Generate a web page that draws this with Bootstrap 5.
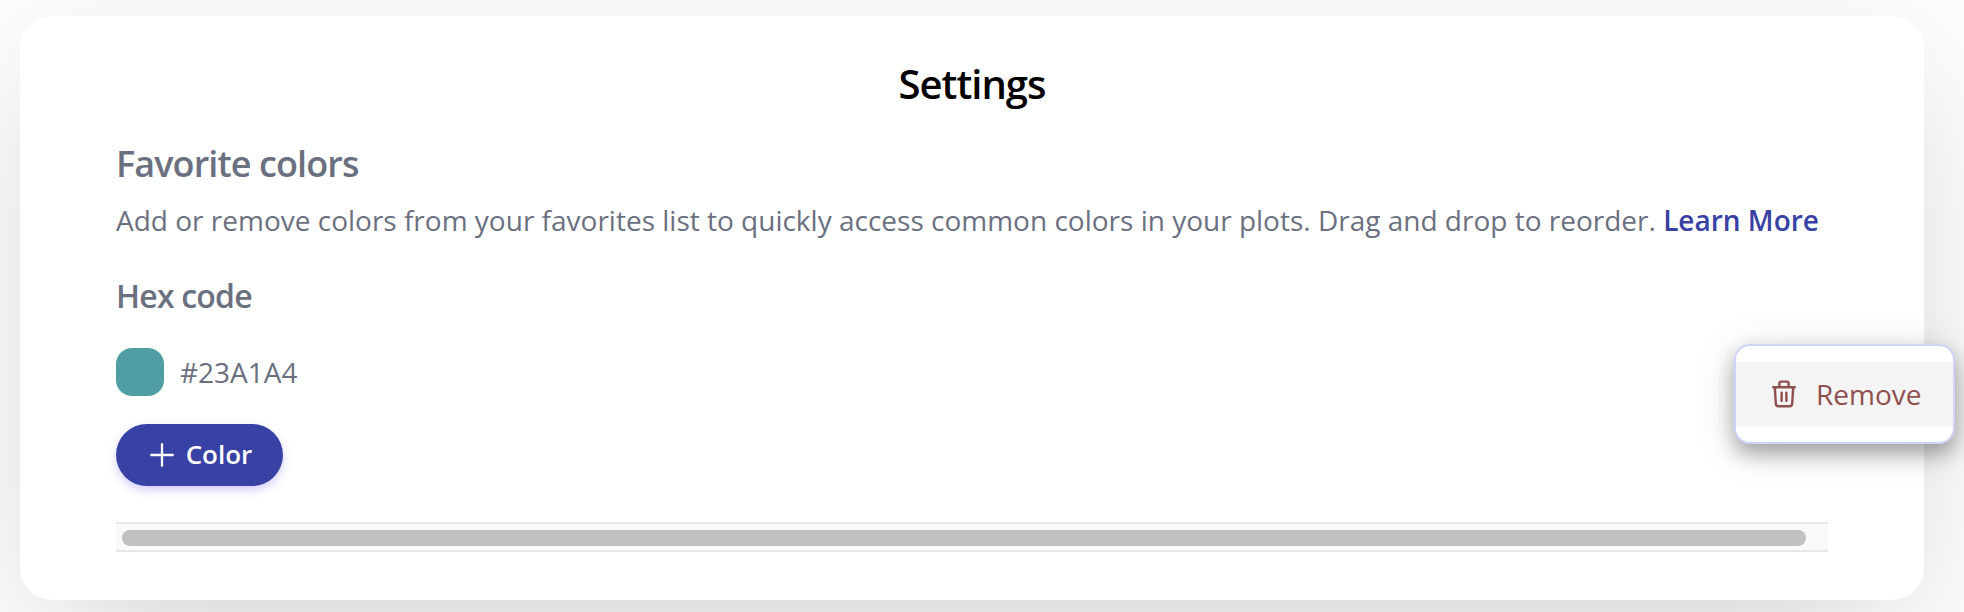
<!DOCTYPE html>
<html lang="en">
<head>
<meta charset="utf-8">
<title>Settings</title>
<link href="https://cdn.jsdelivr.net/npm/bootstrap@5.3.0/dist/css/bootstrap.min.css" rel="stylesheet">
<style>
body{font-family:"Open Sans",sans-serif;font-size:28px;line-height:42px;color:#6b7080;background:#fcfcfc;height:612px;overflow:hidden}
.panel{margin:16px 40px 0 20px;height:584px;border:0;border-radius:32px;padding:44px 96px 0;box-shadow:0 40px 140px -40px rgba(0,0,0,.22)}
.page-title{font-size:40px;line-height:48px;font-weight:600;letter-spacing:-1px;color:#000;margin:0 0 34px}
.section-title{font-size:36px;line-height:44px;font-weight:600;letter-spacing:-.9px;margin:0 0 13px}
.sub-title{font-size:32px;line-height:40px;font-weight:600;letter-spacing:-.8px;margin:35px 0 32px}
.intro{white-space:nowrap}
.intro a{color:#3842a4;font-weight:600}
.swatch{width:48px;height:48px;border-radius:16px;background:#4f9ea3}
.btn-color{width:167px;height:62px;margin-top:28px;background:#3842a4;color:#fff;font-size:26px;line-height:40px;font-weight:600;box-shadow:0 4px 10px rgba(80,70,230,.26)}
.btn-color:hover{background:#2f388f;color:#fff}
.btn-color svg{margin-right:1px}
.btn-text{padding-bottom:2px}
.track{height:30px;margin-top:36px;background:#fafafa;border:solid #e8e8e8;border-width:2px 0;padding:6px 22px 6px 6px}
.thumb{height:16px;background:#c1c1c1}
.remove-menu{left:1734px;top:344px;width:221px;height:100px;min-width:0;border:2px solid #cfd3f8;border-radius:16px;padding:16px 0;box-shadow:0 10px 20px rgba(0,0,0,.3),0 6px 42px rgba(0,0,0,.13)}
.remove-menu .dropdown-item{height:64px;padding:0 0 0 35px;gap:19px;background:#f4f4f4;color:#90504f;font-size:28px}
</style>
</head>
<body>
<main class="card panel">
  <h1 class="page-title text-center">Settings</h1>
  <h2 class="section-title">Favorite colors</h2>
  <p class="intro mb-0">Add or remove colors from your favorites list to quickly access common colors in your plots. Drag and drop to reorder. <a href="#" class="text-decoration-none">Learn More</a></p>
  <h3 class="sub-title">Hex code</h3>
  <div class="d-flex align-items-center gap-3">
    <span class="swatch"></span><span class="hex-value">#23A1A4</span>
  </div>
  <button type="button" class="btn btn-color rounded-pill border-0 p-0 d-flex align-items-center justify-content-center gap-2">
    <svg width="30" height="30" viewBox="0 0 30 30" fill="none" stroke="currentColor" stroke-width="2.3" stroke-linecap="round"><path d="M15 4.2v21.6M4.2 15h21.6"/></svg>
    <span class="btn-text">Color</span>
  </button>
  <div class="track"><div class="thumb rounded-pill"></div></div>
</main>
<div class="dropdown-menu remove-menu d-block">
  <a href="#" class="dropdown-item d-flex align-items-center">
    <svg width="26" height="30" viewBox="0 0 26 30" fill="none" stroke="currentColor" stroke-width="2.4" stroke-linecap="round" stroke-linejoin="round"><path d="M2.2 8.2h21.6M8.4 8V4.2q0-1.6 1.6-1.6h6q1.6 0 1.6 1.6V8M3.8 8.4l1 16.2q.2 2.7 2.7 2.7h11q2.5 0 2.7-2.7L22.2 8.4M10.6 13.6v8.2M15.4 13.6v8.2"/></svg>
    <span>Remove</span>
  </a>
</div>
<script src="https://cdn.jsdelivr.net/npm/bootstrap@5.3.0/dist/js/bootstrap.bundle.min.js"></script>
</body>
</html>
